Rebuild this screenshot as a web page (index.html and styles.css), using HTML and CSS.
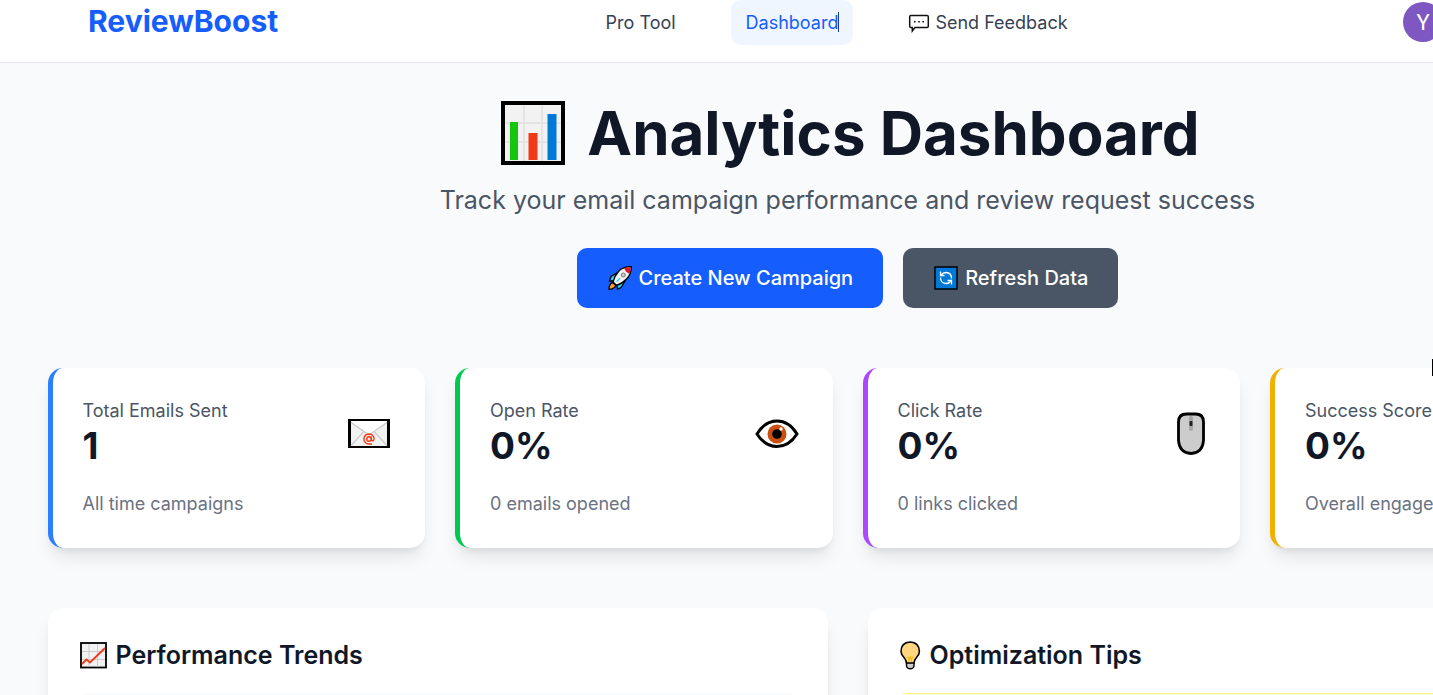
FILE: index.html
```html
<!DOCTYPE html>
<html lang="en">
<head>
    <meta charset="UTF-8">
    <title>ReviewBoost</title>
    <link rel="stylesheet" href="styles.css">
</head>
<body>
<div class="page">

    <!-- Top bar -->
    <header class="topbar">
        <div class="topbar-inner">
            <a class="brand" href="#">ReviewBoost</a>
            <nav class="nav">
                <a class="nav-link" href="#">Pro Tool</a>
                <a class="nav-link active" href="#">Dashboard<span class="text-cursor"></span></a>
                <a class="nav-link" href="#">
                    <svg class="nav-icon" viewBox="0 0 22 20" fill="none" stroke="#111" stroke-width="1.5">
                        <path d="M3 2.5H19Q20.3 2.5 20.3 3.8V13.2Q20.3 14.5 19 14.5H7L4.3 18V14.5H3Q1.7 14.5 1.7 13.2V3.8Q1.7 2.5 3 2.5Z" fill="#fff"/>
                        <path d="M6 8.7H7.6M10.2 8.7H11.8M14.4 8.7H16" stroke-width="1.6"/>
                    </svg>
                    Send Feedback
                </a>
            </nav>
            <div class="account">
                <button class="avatar">Y</button>
            </div>
        </div>
    </header>

    <main class="container">
        <!-- Heading -->
        <section class="hero">
            <h1>
                <svg class="hero-icon" viewBox="0 0 64 64">
                    <rect width="64" height="64" fill="#000"/>
                    <rect x="4" y="4" width="56" height="56" fill="#f2f2f2"/>
                    <path d="M23 4V60M41 4V60M4 22H60M4 41H60" stroke="#e4e4e4" stroke-width="2"/>
                    <rect x="9" y="21" width="8" height="38" fill="#16c60c"/>
                    <rect x="27.500" y="32" width="9" height="27" fill="#f03a17"/>
                    <rect x="46.500" y="13" width="9" height="46" fill="#0078d7"/>
                </svg>
                Analytics Dashboard
            </h1>
            <p class="subtitle">Track your email campaign performance and review request success</p>
            <div class="actions">
                <button class="btn btn-primary">
                    <svg class="btn-icon" viewBox="0 0 26 26">
                        <path d="M9 8.500L4 11.500L2.500 16L7.500 16Z" fill="#31d2f7" stroke="#000" stroke-width="1.300"/>
                        <path d="M17.500 17L14 22.500L10.500 24L10 18.500Z" fill="#31d2f7" stroke="#000" stroke-width="1.300"/>
                        <path d="M5.500 17.500Q2 19 2 24.300Q7 24.300 9 20.500Z" fill="#f7a22b" stroke="#000" stroke-width="1.300"/>
                        <path d="M24.300 1.700Q16 1.500 11.500 6.500Q7.500 11 6 17L9.500 20.300Q15.500 18.500 19.500 14Q24.500 9 24.300 1.700Z" fill="#f2f2f2" stroke="#000" stroke-width="1.300"/>
                        <path d="M23.600 2.400Q19.500 2.300 17 3.500Q19 7.500 22.500 9Q23.800 6 23.600 2.400Z" fill="#e81224"/>
                        <circle cx="16.300" cy="10" r="2" fill="#ccc" stroke="#767676"/>
                        <path d="M9.500 16.700L13 13.200" stroke="#31d2f7" stroke-width="1.500"/>
                    </svg>
                    Create New Campaign
                </button>
                <button class="btn btn-secondary">
                    <svg class="btn-icon" viewBox="0 0 26 26" fill="none">
                        <rect x="2" y="2" width="22" height="22" fill="#0078d7" stroke="#000" stroke-width="1.500"/>
                        <path d="M8 10Q10 7.500 13 7.500Q18.500 7.800 18.500 13.500M18 16Q16 18.500 13 18.500Q7.500 18.200 7.500 12.500" stroke="#fff" stroke-width="1.300"/>
                        <path d="M7.500 6.500V10.500H11.500M18.500 19.500V15.500H14.500" stroke="#fff" stroke-width="1.300"/>
                    </svg>
                    Refresh Data
                </button>
            </div>
        </section>

        <!-- Stats -->
        <section class="stats">
            <div class="stat-card blue">
                <div class="stat-top">
                    <div>
                        <p class="stat-label">Total Emails Sent</p>
                        <p class="stat-value">1</p>
                    </div>
                    <svg class="stat-icon" viewBox="0 0 50 50">
                        <rect x="3" y="11" width="42" height="29" fill="#000"/>
                        <rect x="6" y="13" width="36" height="25" fill="#f2f2f2"/>
                        <path d="M6 13.500L24 27L42 13.500V13H6Z" fill="#fff"/>
                        <path d="M6 14.500L24 27L42 14.500M6 37.500L18.500 24M42 37.500L29.500 24" fill="none" stroke="#ccc" stroke-width="1.300"/>
                        <circle cx="24" cy="31" r="2.200" fill="none" stroke="#f03a17" stroke-width="1.400"/>
                        <path d="M26.300 28.500V32Q28.800 34 29.100 30.500Q28.500 26.200 24 26Q19.200 26.300 18.900 31Q19.300 35.800 24 36H27" fill="none" stroke="#f03a17" stroke-width="1.400"/>
                    </svg>
                </div>
                <p class="stat-note">All time campaigns</p>
            </div>

            <div class="stat-card green">
                <div class="stat-top">
                    <div>
                        <p class="stat-label">Open Rate</p>
                        <p class="stat-value">0%</p>
                    </div>
                    <svg class="stat-icon" viewBox="0 0 50 50">
                        <path d="M4 26Q12 13 24 13Q36 13 44 26Q36 38.500 24 38.500Q12 38.500 4 26Z" fill="#fff" stroke="#000" stroke-width="3"/>
                        <circle cx="24" cy="26" r="9.500" fill="#ca5010"/>
                        <circle cx="24" cy="26" r="4.800" fill="#000"/>
                        <circle cx="28" cy="21" r="1.700" fill="#fff"/>
                    </svg>
                </div>
                <p class="stat-note">0 emails opened</p>
            </div>

            <div class="stat-card purple">
                <div class="stat-top">
                    <div>
                        <p class="stat-label">Click Rate</p>
                        <p class="stat-value">0%</p>
                    </div>
                    <svg class="stat-icon narrow" viewBox="0 0 38 50">
                        <path d="M14.500 6H23.500Q31.500 6 31.500 14V32.500Q30.500 45 19 45.500Q7.500 45 6.500 32.500V14Q6.500 6 14.500 6Z" fill="#ccc" stroke="#000" stroke-width="2.800"/>
                        <rect x="17" y="8" width="4" height="15" rx="2" fill="#a6a6a6"/>
                        <rect x="17.500" y="13" width="3" height="5" rx="1" fill="#222"/>
                    </svg>
                </div>
                <p class="stat-note">0 links clicked</p>
            </div>

            <div class="stat-card yellow">
                <div class="stat-top">
                    <div>
                        <p class="stat-label">Success Score</p>
                        <p class="stat-value">0%</p>
                    </div>
                </div>
                <p class="stat-note">Overall engagement</p>
            </div>
        </section>

        <!-- Panels -->
        <section class="panels">
            <div class="panel">
                <h2>
                    <svg class="panel-icon" viewBox="0 0 30 30" fill="none">
                        <rect x="3" y="2" width="25" height="24.500" fill="#f2f2f2" stroke="#000" stroke-width="1.800"/>
                        <path d="M11 3V25.500M19.500 3V25.500M4 10.500H27M4 18.500H27" stroke="#ccc"/>
                        <path d="M4 23L8.500 18.500L12 21.500L27 7" stroke="#f03a17" stroke-width="1.800"/>
                    </svg>
                    Performance Trends
                </h2>
                <div class="chart-box"></div>
            </div>
            <div class="panel">
                <h2>
                    <svg class="panel-icon bulb" viewBox="0 0 24 30">
                        <path d="M8.500 21.500H16V25Q15.500 27.800 12.200 27.800Q9 27.800 8.500 25Z" fill="#ccc" stroke="#000" stroke-width="1.400"/>
                        <path d="M12.200 1Q3 1.500 3 10.500Q3.200 14 6 16.500Q8 18.500 8.500 22H16Q16.500 18.500 18.500 16.500Q21.300 14 21.400 10.500Q21.200 1.500 12.200 1Z" fill="#ffd67d" stroke="#000" stroke-width="1.600"/>
                        <path d="M9.500 16L11 18L12.200 16L13.500 18L15 16M11 18V21M13.500 18V21" fill="none" stroke="#f2b800" stroke-width="1.200"/>
                    </svg>
                    Optimization Tips
                </h2>
                <div class="tip-box"></div>
            </div>
        </section>
    </main>
</div>
<div class="pointer"></div>
</body>
</html>
```
FILE: styles.css
```css
* {
    box-sizing: border-box;
}
body {
    margin: 0;
    overflow: hidden;
    font-family: Inter, "Liberation Sans", sans-serif;
    background-color: #f9fafc;
    color: #101828;
}
h1, h2, p {
    margin: 0;
}
a {
    text-decoration: none;
}
button {
    font-family: inherit;
    border: none;
    cursor: pointer;
}
svg {
    display: block;
    flex-shrink: 0;
}
.page {
    min-width: 1695px;
}

/* Top bar */
.topbar {
    background-color: #fff;
    border-bottom: 1px solid #e5e7eb;
    padding: 0 88px 17px;
}
.topbar-inner {
    display: flex;
    justify-content: space-between;
    align-items: flex-start;
}
.brand {
    font-size: 30px;
    font-weight: 700;
    line-height: 42px;
    color: #155dfc;
}
.nav {
    display: flex;
    gap: 40px;
}
.nav-link {
    display: flex;
    align-items: center;
    gap: 5px;
    position: relative;
    padding: 10px 15px;
    border-radius: 10px;
    font-size: 18px;
    line-height: 25px;
    color: #364153;
}
.nav-link.active {
    background-color: #eff6ff;
    color: #155dfc;
}
.nav-icon {
    width: 22px;
    height: 20px;
}
.text-cursor {
    position: absolute;
    top: 12px;
    right: 14px;
    width: 1px;
    height: 20px;
    background-color: #1c398e;
}
.account {
    width: 212px;
    padding: 2px 0 0 8px;
}
.avatar {
    display: block;
    width: 40px;
    height: 40px;
    padding: 0;
    border-radius: 50%;
    background-color: #7e57c2;
    color: #fff;
    font-family: Roboto, sans-serif;
    font-size: 22px;
}

/* Heading */
.container {
    max-width: 1600px;
    margin: 0 auto;
    padding: 32px 0 40px;
}
.hero {
    display: flex;
    flex-direction: column;
    align-items: center;
    margin-bottom: 60px;
}
h1 {
    display: flex;
    align-items: center;
    gap: 22px;
    padding-left: 6px;
    font-size: 60px;
    font-weight: 700;
    line-height: 76px;
}
.hero-icon {
    width: 64px;
    height: 64px;
}
.subtitle {
    margin: 12px 0 30px;
    font-size: 25px;
    line-height: 35px;
    color: #4a5565;
}
.actions {
    display: flex;
    gap: 20px;
}
.btn {
    display: flex;
    align-items: center;
    gap: 6px;
    height: 60px;
    padding: 0 30px;
    border-radius: 10px;
    font-size: 20px;
    font-weight: 500;
    color: #fff;
}
.btn-primary {
    background-color: #155dfc;
}
.btn-secondary {
    background-color: #4a5565;
}
.btn-icon {
    width: 26px;
    height: 26px;
}

/* Stats */
.stats {
    display: grid;
    grid-template-columns: repeat(4, 1fr);
    gap: 30px;
    margin-bottom: 60px;
}
.stat-card, .panel {
    background-color: #fff;
    border-radius: 15px;
    padding: 30px;
    box-shadow: 0 12px 18px -4px rgba(0, 0, 0, 0.1), 0 5px 8px -5px rgba(0, 0, 0, 0.1);
}
.stat-card {
    border-left: 5px solid;
}
.blue {
    border-color: #2b7fff;
}
.green {
    border-color: #00c950;
}
.purple {
    border-color: #ad46ff;
}
.yellow {
    border-color: #f0b100;
}
.stat-top {
    display: flex;
    justify-content: space-between;
    align-items: center;
    margin-bottom: 22px;
}
.stat-label {
    font-size: 18px;
    line-height: 25px;
    color: #4a5565;
}
.stat-value {
    font-size: 37px;
    font-weight: 700;
    line-height: 45px;
    color: #101828;
}
.stat-icon {
    width: 50px;
    height: 50px;
}
.stat-icon.narrow {
    width: 38px;
}
.stat-note {
    font-size: 18px;
    line-height: 28px;
    color: #6a7282;
}

/* Panels */
.panels {
    display: grid;
    grid-template-columns: repeat(2, 1fr);
    gap: 40px;
}
h2 {
    display: flex;
    align-items: center;
    gap: 8px;
    margin-bottom: 20px;
    font-size: 25px;
    font-weight: 600;
    line-height: 35px;
}
.panel-icon {
    width: 30px;
    height: 30px;
}
.panel-icon.bulb {
    width: 24px;
}
.chart-box, .tip-box {
    min-height: 120px;
    border-radius: 10px;
}
.chart-box {
    background-color: #f9fafb;
}
.tip-box {
    background-color: #fefce8;
    border: 1px solid #fff085;
}

/* Mouse pointer at the window edge */
.pointer {
    position: absolute;
    top: 359px;
    right: 0;
    width: 1px;
    height: 17px;
    background-color: #000;
}
```
